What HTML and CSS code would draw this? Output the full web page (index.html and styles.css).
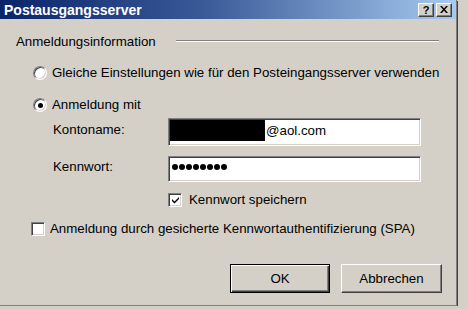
FILE: index.html
```html
<!DOCTYPE html>
<html>
<head>
    <title>Postausgangsserver</title>
    <link rel="stylesheet" href="styles.css">
</head>
<body>
    <div class="dialog">
        <div class="titlebar">
            <span class="title">Postausgangsserver</span>
            <div class="caption-buttons">
                <div class="cap-btn help">?</div>
                <div class="cap-btn close">
                    <svg width="8" height="7" viewBox="0 0 8 7">
                        <path d="M0 0h2l2 2.5L6 0h2L5 3.5 8 7H6L4 4.5 2 7H0l3-3.5z" fill="#000"/>
                    </svg>
                </div>
            </div>
        </div>

        <div class="content">
            <div class="group-head">
                <span>Anmeldungsinformation</span>
                <div class="groove"></div>
            </div>

            <div class="option-row row-same">
                <span class="radio"></span>
                <span>Gleiche Einstellungen wie für den Posteingangsserver verwenden</span>
            </div>

            <div class="option-row row-login">
                <span class="radio checked"></span>
                <span>Anmeldung mit</span>
            </div>

            <div class="field-row row-account">
                <span class="field-label">Kontoname:</span>
                <div class="textbox">
                    <span class="redacted"></span>
                    <span class="textbox-value">@aol.com</span>
                </div>
            </div>

            <div class="field-row row-password">
                <span class="field-label">Kennwort:</span>
                <div class="textbox password">
                    <span class="dot"></span><span class="dot"></span><span class="dot"></span><span class="dot"></span>
                    <span class="dot"></span><span class="dot"></span><span class="dot"></span><span class="dot"></span>
                </div>
            </div>

            <div class="check-row row-remember">
                <span class="checkbox checked">
                    <svg width="7" height="7" viewBox="0 0 7 7">
                        <path d="M0 2l2.5 2.5L7 0v2L2.5 6.5 0 4z" fill="#000"/>
                    </svg>
                </span>
                <span>Kennwort speichern</span>
            </div>

            <div class="check-row row-spa">
                <span class="checkbox"></span>
                <span>Anmeldung durch gesicherte Kennwortauthentifizierung (SPA)</span>
            </div>

            <div class="button-row">
                <div class="push-button default">OK</div>
                <div class="push-button">Abbrechen</div>
            </div>
        </div>
    </div>
</body>
</html>
```

FILE: styles.css
```css
body {
    margin: 0;
    background-color: #d4d0c8;
    font-family: "Liberation Sans", Arial, sans-serif;
    font-size: 13.3px;
    color: #000;
}

.dialog {
    width: 456px;
    height: 305px;
    border-right: 1px solid #808080;
    border-bottom: 1px solid #808080;
    box-shadow: 1px 1px 0 #404040;
    background-color: #d4d0c8;
}

.titlebar {
    height: 19px;
    display: flex;
    align-items: center;
    justify-content: space-between;
    padding: 0 4px 0 4px;
    background: linear-gradient(to right, #0a246a 0%, #3a5a98 45%, #a6caf0 100%);
}

.title {
    color: #fff;
    font-weight: bold;
    font-size: 14px;
}

.caption-buttons {
    display: flex;
    gap: 2px;
}

.cap-btn {
    width: 14px;
    height: 12px;
    display: flex;
    align-items: center;
    justify-content: center;
    background-color: #d4d0c8;
    border: 1px solid;
    border-color: #fff #404040 #404040 #fff;
    box-shadow: inset -1px -1px 0 #808080;
    font-weight: bold;
    font-size: 11px;
    line-height: 12px;
}

.content {
    display: flex;
    flex-direction: column;
}

.group-head {
    height: 20px;
    margin-top: 13px;
    padding-left: 16px;
    display: flex;
    line-height: 20px;
}

.groove {
    width: 263px;
    margin: 8px 0 0 20px;
    height: 0;
    border-top: 1px solid #808080;
    border-bottom: 1px solid #fff;
}

.option-row,
.check-row {
    height: 20px;
    display: flex;
    align-items: center;
    line-height: 20px;
}

.option-row {
    padding-left: 33px;
    gap: 5px;
}

.row-same {
    margin-top: 11px;
}

.row-login {
    margin-top: 12px;
}

.radio {
    width: 12px;
    height: 12px;
    border-radius: 50%;
    border: 1px solid;
    border-color: #808080 #fff #fff #808080;
    box-shadow: inset 1px 1px 0 #404040, inset -1px -1px 0 #d4d0c8;
    background-color: #fff;
    display: flex;
    align-items: center;
    justify-content: center;
}

.radio.checked::after {
    content: "";
    width: 5px;
    height: 5px;
    border-radius: 50%;
    background-color: #000;
}

.field-row {
    display: flex;
    padding-left: 53px;
    line-height: 20px;
}

.field-label {
    width: 115px;
    margin-top: 2px;
}

.row-account {
    height: 28px;
    margin-top: 3px;
}

.row-password {
    height: 26px;
    margin-top: 10px;
}

.row-password .field-label {
    margin-top: 1px;
}

.textbox {
    width: 253px;
    box-sizing: border-box;
    background-color: #fff;
    border: 1px solid;
    border-color: #808080 #fff #fff #808080;
    box-shadow: inset 1px 1px 0 #404040, inset -1px -1px 0 #d4d0c8;
    display: flex;
    align-items: flex-start;
    padding: 1px 0 0 1px;
}

.redacted {
    width: 95px;
    height: 21px;
    background-color: #000;
}

.textbox-value {
    line-height: 21px;
    padding-left: 1px;
}

.password {
    padding: 7px 0 0 3px;
    gap: 1px;
}

.dot {
    width: 6px;
    height: 6px;
    border-radius: 50%;
    background-color: #000;
}

.checkbox {
    width: 12px;
    height: 12px;
    border: 1px solid;
    border-color: #808080 #fff #fff #808080;
    box-shadow: inset 1px 1px 0 #404040, inset -1px -1px 0 #d4d0c8;
    background-color: #fff;
    display: flex;
    align-items: center;
    justify-content: center;
}

.row-remember {
    margin-top: 8px;
    padding-left: 168px;
    gap: 7px;
}

.row-spa {
    margin-top: 9px;
    padding-left: 31px;
    gap: 5px;
}

.button-row {
    margin-top: 25px;
    height: 29px;
    display: flex;
    justify-content: flex-end;
    gap: 11px;
    padding-right: 14px;
}

.push-button {
    width: 101px;
    box-sizing: border-box;
    display: flex;
    align-items: center;
    justify-content: center;
    border: 1px solid;
    border-color: #fff #404040 #404040 #fff;
    box-shadow: inset -1px -1px 0 #808080;
}

.push-button.default {
    width: 100px;
    border: 1px solid #000;
    box-shadow: inset 1px 1px 0 #fff, inset -1px -1px 0 #404040, inset -2px -2px 0 #808080;
}
```
